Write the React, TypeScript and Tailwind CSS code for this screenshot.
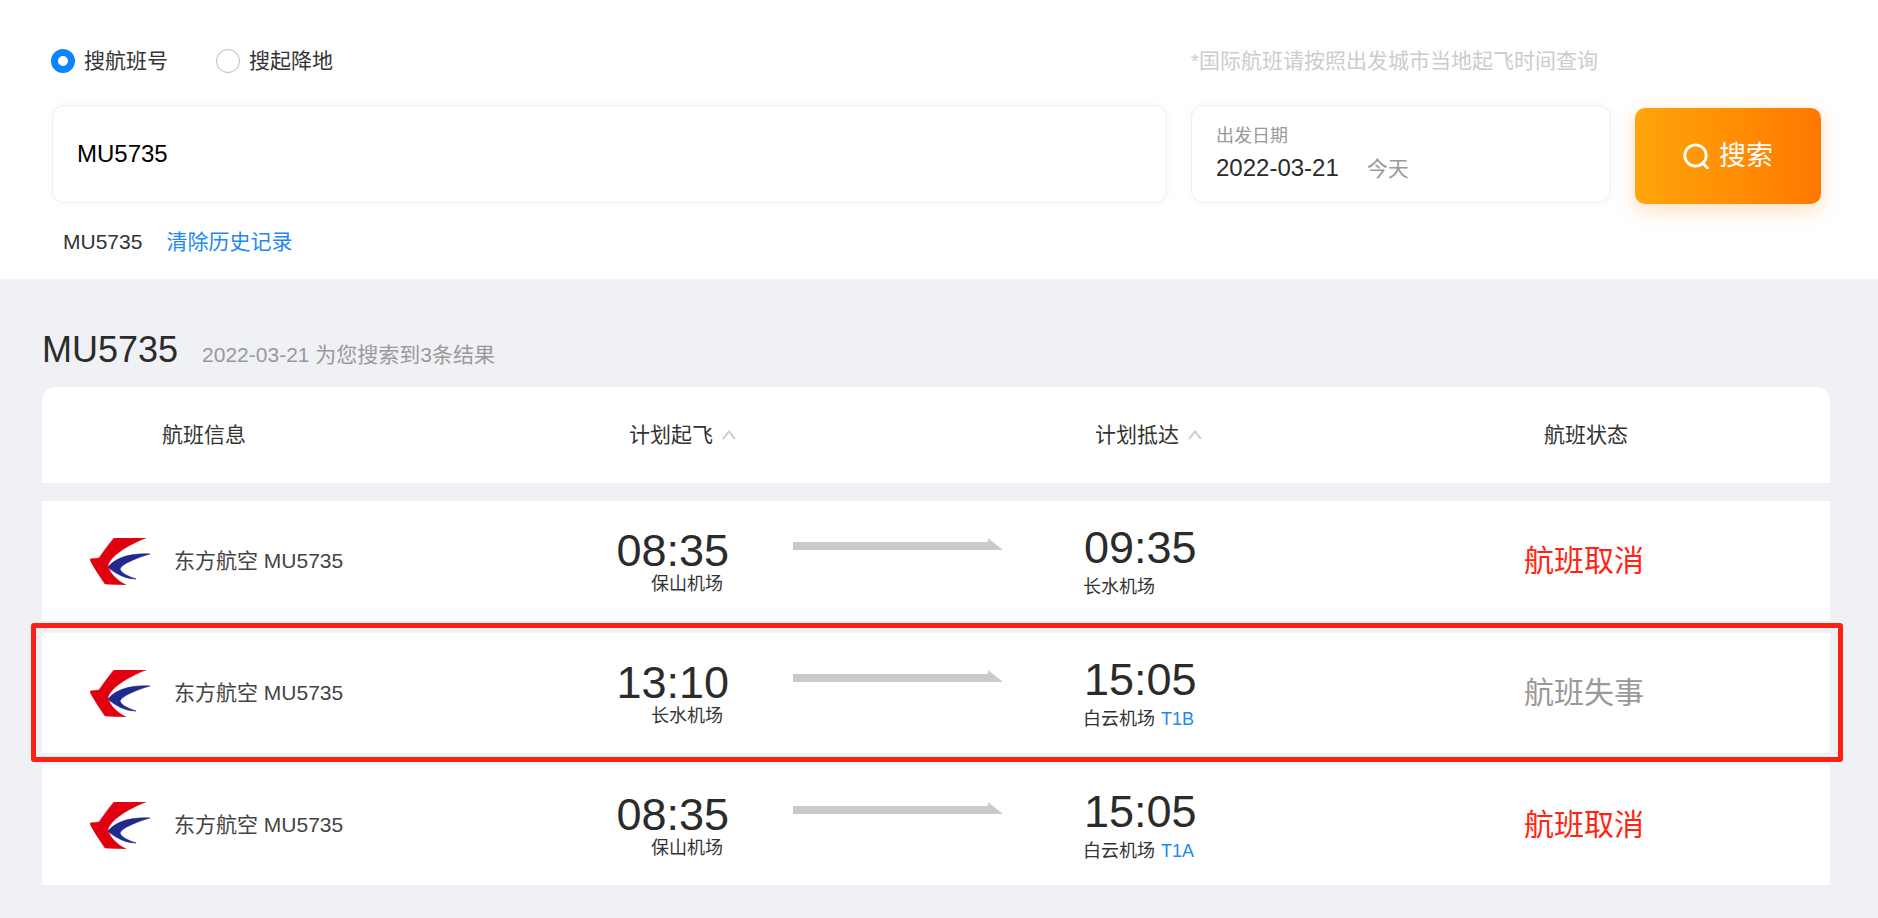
import React from 'react';

interface Flight {
  dep: string;
  depPort: string;
  arr: string;
  arrPort: string;
  terminal?: string;
  status: string;
  failed?: boolean;
}

const flights: Flight[] = [
  { dep: '08:35', depPort: '保山机场', arr: '09:35', arrPort: '长水机场', status: '航班取消' },
  { dep: '13:10', depPort: '长水机场', arr: '15:05', arrPort: '白云机场', terminal: 'T1B', status: '航班失事', failed: true },
  { dep: '08:35', depPort: '保山机场', arr: '15:05', arrPort: '白云机场', terminal: 'T1A', status: '航班取消' },
];

const Logo = () => (
  <svg width="60" height="47" viewBox="0 0 60 47" className="shrink-0">
    <path d="M56 0 L24 0 C19 6 13 14 9 20 L0 21 L1 24 C5 31 10 39 15 46 L36 47 C28 43 20 36 18 28 C20 18 38 7 56 0 Z" fill="#e1000f" stroke="#e1000f" strokeWidth="0.5" />
    <path d="M60 16 C44 15 27 18 18 29 C22 33 33 41 46 41 C38 38 32 36 30 31 C32 26 46 20 60 16 Z" fill="#1f2a8c" stroke="#1f2a8c" strokeWidth="0.6" />
  </svg>
);

const Chevron = () => (
  <svg width="14" height="10" viewBox="0 0 14 10" className="shrink-0">
    <polyline points="1,9 7,1.5 13,9" fill="none" stroke="#cccccc" strokeWidth="2" />
  </svg>
);

const Arrow = () => (
  <svg width="210" height="12" viewBox="0 0 210 12" className="shrink-0 self-start mt-[37px]">
    <polygon points="0,4 195,4 195,0 210,12 0,12" fill="#cacaca" />
  </svg>
);

const SearchIcon = () => (
  <svg width="26" height="26" viewBox="0 0 26 26" fill="none" stroke="#ffffff" strokeWidth="2.8" className="shrink-0">
    <circle cx="12.5" cy="12.5" r="10.7" />
    <line x1="19.5" y1="20" x2="24.5" y2="25" strokeLinecap="round" />
  </svg>
);

const FlightRow: React.FC<{ flight: Flight }> = ({ flight }) => (
  <div className="flex items-center h-[120px] bg-white">
    <div className="flex items-center w-[518px] pl-[48px] gap-[24px]">
      <Logo />
      <span className="text-[21px] leading-[24px] text-[#444444]">东方航空 MU5735</span>
    </div>
    <div className="flex flex-col items-end w-[169px]">
      <span className="text-[45px] leading-[45px] mb-[1px] text-[#2b2b2b]">{flight.dep}</span>
      <span className="text-[18px] leading-[20px] pr-[6px] mb-[1px] text-[#333333]">{flight.depPort}</span>
    </div>
    <div className="flex self-stretch w-[355px] pl-[64px]">
      <Arrow />
    </div>
    <div className="flex flex-col w-[299px]">
      <span className="text-[45px] leading-[45px] text-[#2b2b2b]">{flight.arr}</span>
      <span className="text-[18px] leading-[20px] mt-[7px] mb-[1px] -ml-[1px] text-[#333333]">
        {flight.arrPort}
        {flight.terminal && <span className="ml-[6px] text-[#1e88f5]">{flight.terminal}</span>}
      </span>
    </div>
    <div className={`w-[402px] text-center text-[30px] leading-[36px] ${flight.failed ? 'text-[#999999]' : 'text-[#ff2412]'}`}>
      {flight.status}
    </div>
  </div>
);

export default function App() {
  return (
    <div className="relative min-h-[918px] bg-[#f0f1f5] font-['Liberation_Sans','Noto_Sans_CJK_SC',sans-serif] overflow-hidden">
      {/* 顶部搜索区 */}
      <div className="h-[279px] bg-white pt-[49px] pl-[51px]">
        <div className="flex items-center justify-between w-[1547px] h-[24px]">
          <div className="flex items-center">
            <span className="w-[24px] h-[24px] rounded-full border-[7px] border-[#0a84ff] bg-white"></span>
            <span className="ml-[9px] text-[21px] leading-[24px] text-[#333333]">搜航班号</span>
            <span className="ml-[48px] w-[24px] h-[24px] rounded-full border border-[#bbbbbb] bg-white"></span>
            <span className="ml-[9px] text-[21px] leading-[24px] text-[#333333]">搜起降地</span>
          </div>
          <span className="text-[21px] leading-[24px] text-[#cccccc]">*国际航班请按照出发城市当地起飞时间查询</span>
        </div>

        <div className="flex items-start mt-[32px] ml-[1px]">
          <div className="flex items-center w-[1115px] h-[98px] pl-[24px] bg-white border border-[#eeeeee] rounded-[12px] shadow-[0_0_12px_rgba(0,0,0,0.03)] text-[24px] text-black">
            MU5735
          </div>
          <div className="ml-[24px] w-[420px] h-[98px] pl-[24px] pt-[20px] bg-white border border-[#eeeeee] rounded-[12px] shadow-[0_0_12px_rgba(0,0,0,0.03)]">
            <div className="text-[18px] leading-[20px] text-[#999999]">出发日期</div>
            <div className="flex items-center mt-[8px] h-[28px]">
              <span className="text-[24px] leading-[28px] text-[#2b2b2b]">2022-03-21</span>
              <span className="ml-[28px] pt-[2px] text-[21px] leading-[28px] text-[#999999]">今天</span>
            </div>
          </div>
          <div className="flex items-center justify-center gap-[10px] ml-[24px] mt-[3px] w-[186px] h-[96px] rounded-[10px] bg-gradient-to-r from-[#ffa50a] to-[#ff7800] shadow-[0_6px_20px_rgba(255,120,0,0.25)]">
            <SearchIcon />
            <span className="text-[27px] leading-[32px] text-white">搜索</span>
          </div>
        </div>

        <div className="flex mt-[26px] pl-[12px] text-[21px] leading-[24px]">
          <span className="text-[#333333]">MU5735</span>
          <span className="ml-[24px] text-[#1e88f5]">清除历史记录</span>
        </div>
      </div>

      {/* 结果列表 */}
      <div className="ml-[42px] w-[1788px]">
        <div className="flex items-baseline gap-[24px] pt-[51px] mb-[17px]">
          <span className="text-[36px] leading-[40px] text-[#2b2b2b]">MU5735</span>
          <span className="text-[21px] leading-[24px] text-[#999999]">2022-03-21 为您搜索到3条结果</span>
        </div>

        <div className="flex items-center h-[96px] bg-white rounded-t-[14px] text-[21px] leading-[24px] text-[#333333]">
          <div className="w-[587px] pl-[120px]">航班信息</div>
          <div className="flex items-center gap-[9px] w-[466px]">
            计划起飞
            <Chevron />
          </div>
          <div className="flex items-center gap-[9px] w-[449px]">
            计划抵达
            <Chevron />
          </div>
          <div>航班状态</div>
        </div>

        <div className="flex flex-col gap-[12px] mt-[18px]">
          {flights.map((f, i) => (
            <FlightRow key={i} flight={f} />
          ))}
        </div>
      </div>

      {/* 红色标注框 */}
      <div className="absolute left-[31px] top-[623px] w-[1812px] h-[139px] border-[5px] border-[#ff2015] rounded-[3px] pointer-events-none"></div>
    </div>
  );
}
